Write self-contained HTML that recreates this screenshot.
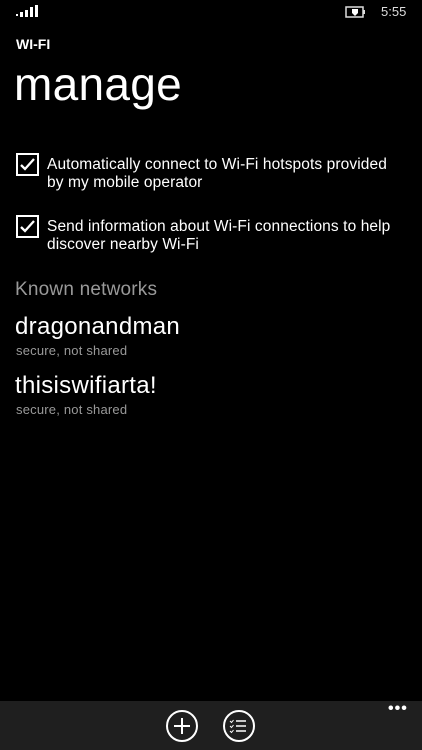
<!DOCTYPE html>
<html><head><style>
body{margin:0;width:422px;height:750px;background:#000;color:#fff;font-family:"Liberation Sans",sans-serif;position:relative;overflow:hidden}
.a{position:absolute;white-space:nowrap}
.cb{position:absolute;left:16px;width:19px;height:19px;border:2px solid #fff}
.t{font-size:15.5px;line-height:18px;left:47px;letter-spacing:0.1px}
.g{color:#999}
</style></head><body>
<svg class="a" style="left:16px;top:5px" width="22" height="12"><rect x="0" y="9" width="2" height="2" fill="#fff"/><rect x="4" y="7" width="3" height="5" fill="#fff"/><rect x="9" y="5" width="3" height="7" fill="#fff"/><rect x="14" y="2" width="3" height="10" fill="#fff"/><rect x="19" y="0" width="3" height="12" fill="#fff"/></svg>
<svg class="a" style="left:345px;top:6px" width="22" height="12"><rect x="1" y="1" width="17" height="10" fill="none" stroke="#ddd" stroke-width="1.5"/><rect x="18" y="4" width="2" height="4" fill="#ddd"/><path d="M7 3h6v4l-3 3-3-3z" fill="#fff"/></svg>
<div class="a" style="left:381px;top:4px;font-size:13px;color:#ddd">5:55</div>
<div class="a" style="left:16px;top:36px;font-size:14px;font-weight:bold">WI-FI</div>
<div class="a" style="left:14px;top:57px;font-size:46px;letter-spacing:0.3px">manage</div>
<div class="cb" style="top:153px"></div>
<svg class="a" style="left:18px;top:155px" width="19" height="19"><path d="M3 10l4 4 9-10" stroke="#fff" stroke-width="2.3" fill="none"/></svg>
<div class="a t" style="top:156px">Automatically connect to Wi-Fi hotspots provided<br>by my mobile operator</div>
<div class="cb" style="top:215px"></div>
<svg class="a" style="left:18px;top:217px" width="19" height="19"><path d="M3 10l4 4 9-10" stroke="#fff" stroke-width="2.3" fill="none"/></svg>
<div class="a t" style="top:218px">Send information about Wi-Fi connections to help<br>discover nearby Wi-Fi</div>
<div class="a g" style="left:15px;top:279px;font-size:19px;letter-spacing:0.2px">Known networks</div>
<div class="a" style="left:15px;top:313px;font-size:24px;letter-spacing:0.3px">dragonandman</div>
<div class="a g" style="left:16px;top:343px;font-size:13px;letter-spacing:0.2px">secure, not shared</div>
<div class="a" style="left:15px;top:372px;font-size:24px;letter-spacing:0.3px">thisiswifiarta!</div>
<div class="a g" style="left:16px;top:402px;font-size:13px;letter-spacing:0.2px">secure, not shared</div>
<div class="a" style="left:0;top:701px;width:422px;height:49px;background:#1f1f1f"></div>
<svg class="a" style="left:165px;top:709px" width="34" height="34"><circle cx="17" cy="17" r="15" stroke="#fff" stroke-width="2" fill="none"/><path d="M17 9v16M9 17h16" stroke="#fff" stroke-width="2"/></svg>
<svg class="a" style="left:222px;top:709px" width="34" height="34"><circle cx="17" cy="17" r="15" stroke="#fff" stroke-width="2" fill="none"/><path d="M14 12h10M14 17h10M14 22h10" stroke="#fff" stroke-width="1.6"/><path d="M8 12l1.5 1.5 2-2.5M8 17l1.5 1.5 2-2.5M8 22l1.5 1.5 2-2.5" stroke="#fff" stroke-width="1" fill="none"/></svg>
<div class="a" style="left:388px;top:700px;font-size:16px;letter-spacing:1px;font-weight:bold">•••</div>
</body></html>
